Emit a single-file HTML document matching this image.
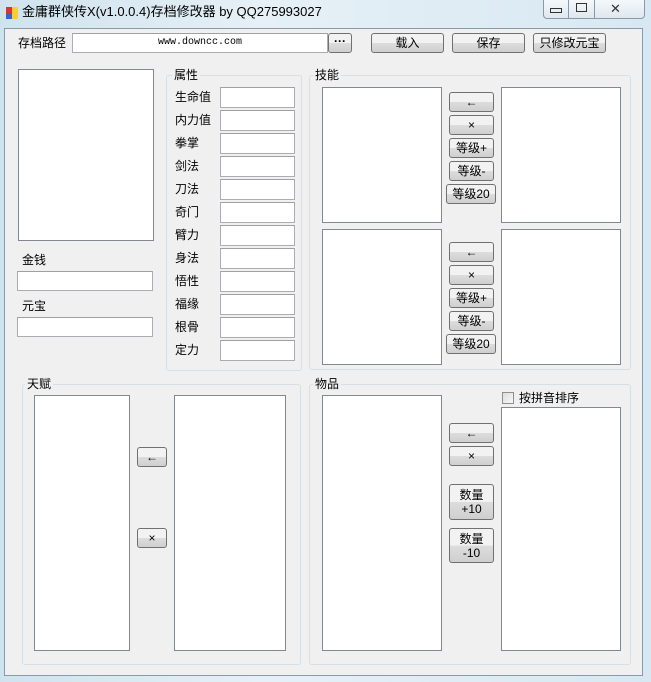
<!DOCTYPE html>
<html><head><meta charset="utf-8"><style>
*{box-sizing:border-box;margin:0;padding:0}
body{width:651px;height:682px;overflow:hidden;background:linear-gradient(90deg,#cfe3ee,#e6f0f6 40%,#d8e8f2);font-family:"Liberation Sans","Noto Sans CJK SC",sans-serif;font-size:12px;color:#000;position:relative}
.a{position:absolute}
.body{left:4px;top:28px;width:639px;height:648px;background:#f0f0f0;border:1px solid #8a9aa8}
.tb{position:absolute;background:#fff;border:1px solid #abadb3;border-top-color:#a0a0a0}
.lb{position:absolute;background:#fff;border:1px solid #828790}
.btn{position:absolute;border:1px solid #707070;border-radius:3px;background:linear-gradient(#f2f2f2 50%,#dddddd 50%,#cfcfcf);text-align:center;font-size:12px;line-height:18px}
.grp{position:absolute;border:1px solid #d5dfe5;border-radius:3px}
.gl{position:absolute;background:#f0f0f0;padding:0 2px;font-size:12px;line-height:14px}
.lab{position:absolute;font-size:12px;line-height:14px}
</style></head><body>
<div class="a" style="left:6px;top:7px;width:12px;height:12px">
<div class="a" style="left:0;top:0;width:6px;height:6px;background:#d33"></div>
<div class="a" style="left:6px;top:0;width:6px;height:6px;background:#fc3"></div>
<div class="a" style="left:0;top:6px;width:6px;height:6px;background:#36c"></div>
<div class="a" style="left:6px;top:6px;width:6px;height:6px;background:#fc3"></div></div>
<div class="a" style="left:22px;top:4px;font-size:13px;line-height:16px">金庸群侠传X(v1.0.0.4)存档修改器 by QQ275993027</div>
<div class="a" style="left:543px;top:0;width:102px;height:19px;border:1px solid #8a98a8;border-top:none;border-radius:0 0 4px 4px;background:linear-gradient(#f4f8fb,#dfe8ef)"></div>
<div class="a" style="left:568px;top:0;width:1px;height:19px;background:#8a98a8"></div>
<div class="a" style="left:594px;top:0;width:1px;height:19px;background:#8a98a8"></div>
<div class="a" style="left:550px;top:8px;width:12px;height:5px;border:1px solid #333"></div>
<div class="a" style="left:576px;top:3px;width:11px;height:9px;border:1px solid #333"></div>
<div class="a" style="left:610px;top:1px;font-size:13px;color:#333">✕</div>
<div class="a body"></div>
<div class="lab" style="left:18px;top:36px">存档路径</div>
<div class="tb" style="left:72px;top:33px;width:256px;height:20px;font-family:'Liberation Mono',monospace;font-size:10px;text-align:center;line-height:18px">www.downcc.com</div>
<div class="btn" style="left:328px;top:33px;width:24px;height:20px;line-height:14px;font-weight:bold">···</div>
<div class="btn" style="left:371px;top:33px;width:73px;height:20px">载入</div>
<div class="btn" style="left:452px;top:33px;width:73px;height:20px">保存</div>
<div class="btn" style="left:533px;top:33px;width:73px;height:20px">只修改元宝</div>
<div class="lb" style="left:18px;top:69px;width:136px;height:172px"></div>
<div class="lab" style="left:22px;top:253px">金钱</div>
<div class="tb" style="left:17px;top:271px;width:136px;height:20px"></div>
<div class="lab" style="left:22px;top:299px">元宝</div>
<div class="tb" style="left:17px;top:317px;width:136px;height:20px"></div>
<div class="grp" style="left:166px;top:75px;width:136px;height:296px"></div>
<div class="gl" style="left:172px;top:68px">属性</div>
<div class="lab" style="left:175px;top:90px">生命值</div><div class="tb" style="left:220px;top:87px;width:75px;height:21px"></div>
<div class="lab" style="left:175px;top:113px">内力值</div><div class="tb" style="left:220px;top:110px;width:75px;height:21px"></div>
<div class="lab" style="left:175px;top:136px">拳掌</div><div class="tb" style="left:220px;top:133px;width:75px;height:21px"></div>
<div class="lab" style="left:175px;top:159px">剑法</div><div class="tb" style="left:220px;top:156px;width:75px;height:21px"></div>
<div class="lab" style="left:175px;top:182px">刀法</div><div class="tb" style="left:220px;top:179px;width:75px;height:21px"></div>
<div class="lab" style="left:175px;top:205px">奇门</div><div class="tb" style="left:220px;top:202px;width:75px;height:21px"></div>
<div class="lab" style="left:175px;top:228px">臂力</div><div class="tb" style="left:220px;top:225px;width:75px;height:21px"></div>
<div class="lab" style="left:175px;top:251px">身法</div><div class="tb" style="left:220px;top:248px;width:75px;height:21px"></div>
<div class="lab" style="left:175px;top:274px">悟性</div><div class="tb" style="left:220px;top:271px;width:75px;height:21px"></div>
<div class="lab" style="left:175px;top:297px">福缘</div><div class="tb" style="left:220px;top:294px;width:75px;height:21px"></div>
<div class="lab" style="left:175px;top:320px">根骨</div><div class="tb" style="left:220px;top:317px;width:75px;height:21px"></div>
<div class="lab" style="left:175px;top:343px">定力</div><div class="tb" style="left:220px;top:340px;width:75px;height:21px"></div>
<div class="grp" style="left:309px;top:75px;width:322px;height:295px"></div>
<div class="gl" style="left:313px;top:68px">技能</div>
<div class="lb" style="left:322px;top:87px;width:120px;height:136px"></div>
<div class="lb" style="left:501px;top:87px;width:120px;height:136px"></div>
<div class="btn" style="left:449px;top:92px;width:45px;height:20px">←</div>
<div class="btn" style="left:449px;top:115px;width:45px;height:20px">×</div>
<div class="btn" style="left:449px;top:138px;width:45px;height:20px">等级+</div>
<div class="btn" style="left:449px;top:161px;width:45px;height:20px">等级-</div>
<div class="btn" style="left:446px;top:184px;width:50px;height:20px">等级20</div>
<div class="lb" style="left:322px;top:229px;width:120px;height:136px"></div>
<div class="lb" style="left:501px;top:229px;width:120px;height:136px"></div>
<div class="btn" style="left:449px;top:242px;width:45px;height:20px">←</div>
<div class="btn" style="left:449px;top:265px;width:45px;height:20px">×</div>
<div class="btn" style="left:449px;top:288px;width:45px;height:20px">等级+</div>
<div class="btn" style="left:449px;top:311px;width:45px;height:20px">等级-</div>
<div class="btn" style="left:446px;top:334px;width:50px;height:20px">等级20</div>
<div class="grp" style="left:22px;top:384px;width:279px;height:281px"></div>
<div class="gl" style="left:25px;top:377px">天赋</div>
<div class="lb" style="left:34px;top:395px;width:96px;height:256px"></div>
<div class="lb" style="left:174px;top:395px;width:112px;height:256px"></div>
<div class="btn" style="left:137px;top:447px;width:30px;height:20px">←</div>
<div class="btn" style="left:137px;top:528px;width:30px;height:20px">×</div>
<div class="grp" style="left:309px;top:384px;width:322px;height:281px"></div>
<div class="gl" style="left:313px;top:377px">物品</div>
<div class="lb" style="left:322px;top:395px;width:120px;height:256px"></div>
<div class="a" style="left:502px;top:392px;width:12px;height:12px;border:1px solid #8e8f8f;background:linear-gradient(135deg,#ddd,#f8f8f8)"></div>
<div class="lab" style="left:519px;top:391px">按拼音排序</div>
<div class="lb" style="left:501px;top:407px;width:120px;height:244px"></div>
<div class="btn" style="left:449px;top:423px;width:45px;height:20px">←</div>
<div class="btn" style="left:449px;top:446px;width:45px;height:20px">×</div>
<div class="btn" style="left:449px;top:484px;width:45px;height:36px;line-height:14px;padding-top:3px">数量<br>+10</div>
<div class="btn" style="left:449px;top:528px;width:45px;height:35px;line-height:14px;padding-top:3px">数量<br>-10</div>
</body></html>
